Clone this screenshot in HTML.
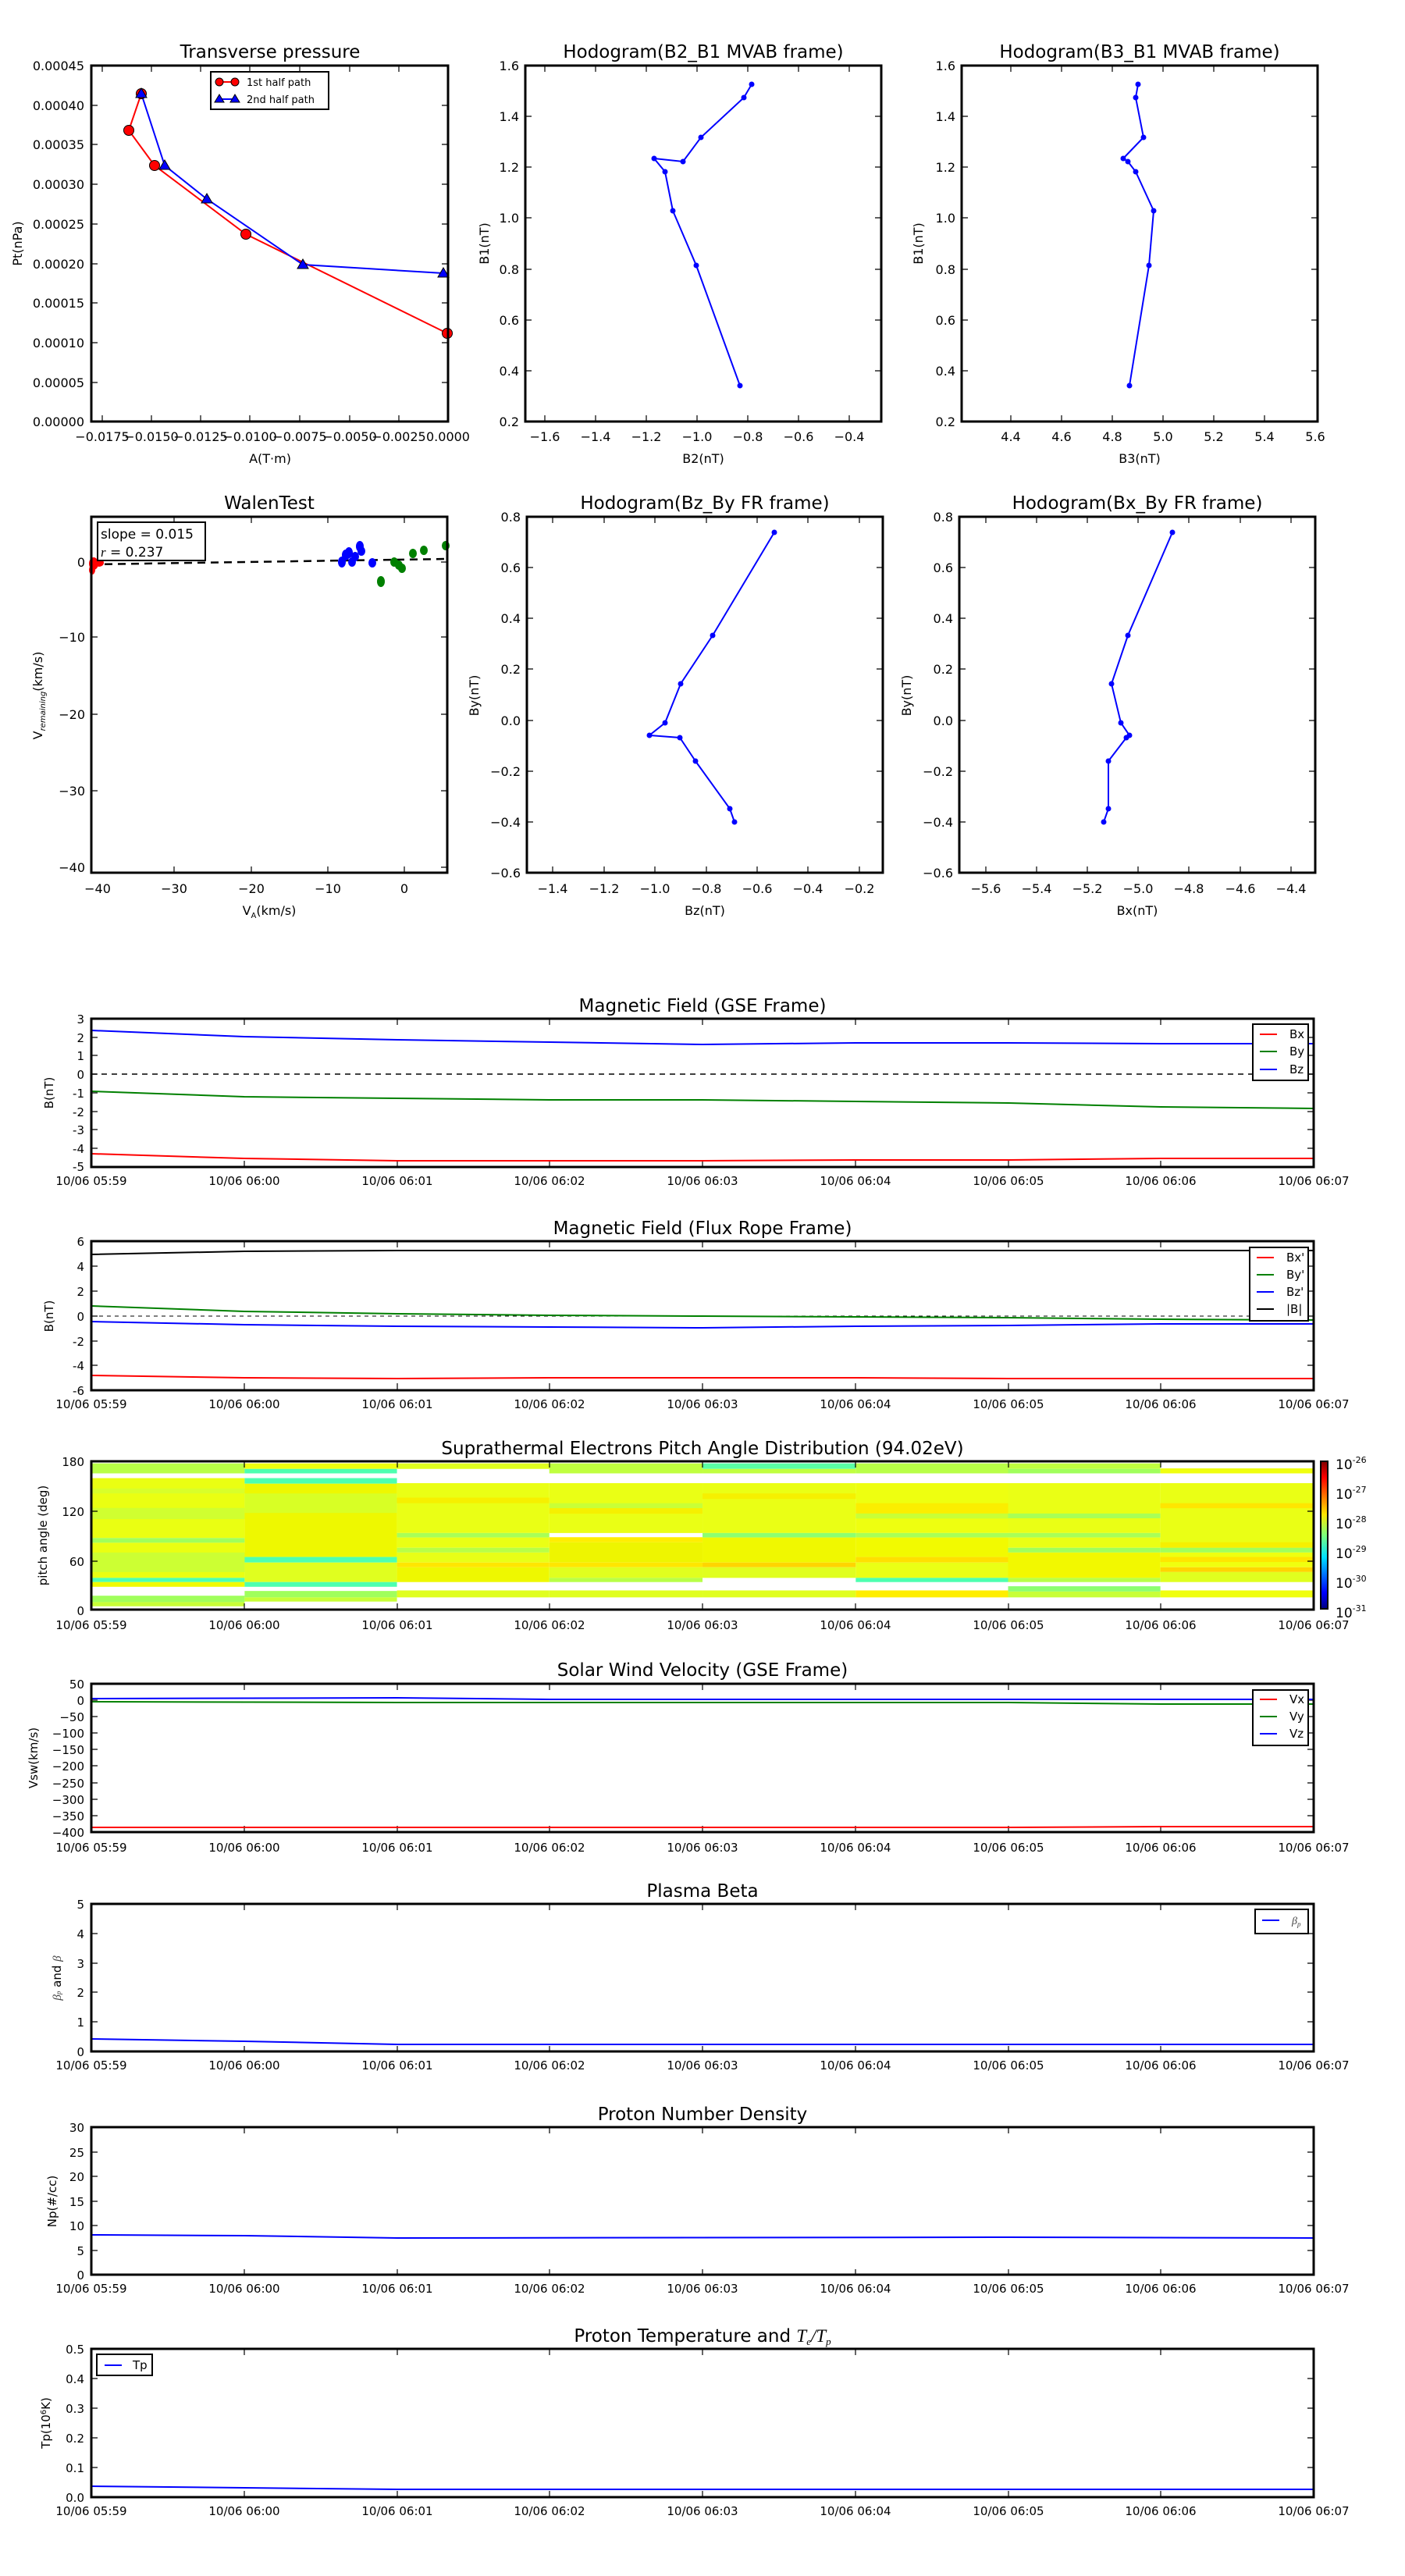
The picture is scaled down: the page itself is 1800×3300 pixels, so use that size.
<!DOCTYPE html>
<html><head><meta charset="utf-8"><style>
html,body{margin:0;padding:0;background:#fff;}
svg{display:block;}
text{font-family:"DejaVu Sans","Liberation Sans",sans-serif;fill:#000;}
.t{font-size:23px;text-anchor:middle;}
.k{font-size:16px;}
.s{font-size:15px;}
.r{text-anchor:end;}
.m{text-anchor:middle;}
.ax{fill:none;stroke:#000;stroke-width:3;}
.tk{stroke:#000;stroke-width:1.2;}
</style></head><body>
<svg width="1800" height="3300" viewBox="0 0 1800 3300" xmlns="http://www.w3.org/2000/svg">
<rect width="1800" height="3300" fill="#fff"/>

<!-- ============ Panel A: Transverse pressure ============ -->
<text class="t" x="346" y="74">Transverse pressure</text>
<g class="tk">
<path d="M131,84v8M194,84v8M257,84v8M320,84v8M384,84v8M448,84v8M511,84v8M131,540v-8M194,540v-8M257,540v-8M320,540v-8M384,540v-8M448,540v-8M511,540v-8"/>
<path d="M117,135h8M117,185h8M117,236h8M117,287h8M117,338h8M117,388h8M117,439h8M117,490h8M574,135h-8M574,185h-8M574,236h-8M574,287h-8M574,338h-8M574,388h-8M574,439h-8M574,490h-8"/>
</g>
<g class="k r">
<text x="108" y="90">0.00045</text><text x="108" y="141">0.00040</text><text x="108" y="191">0.00035</text><text x="108" y="242">0.00030</text><text x="108" y="293">0.00025</text><text x="108" y="344">0.00020</text><text x="108" y="394">0.00015</text><text x="108" y="445">0.00010</text><text x="108" y="496">0.00005</text><text x="108" y="546">0.00000</text>
</g>
<g class="k m">
<text x="131" y="565">−0.0175</text><text x="194" y="565">−0.0150</text><text x="257" y="565">−0.0125</text><text x="320" y="565">−0.0100</text><text x="384" y="565">−0.0075</text><text x="448" y="565">−0.0050</text><text x="511" y="565">−0.0025</text><text x="574" y="565">0.0000</text>
</g>
<text class="k m" x="346" y="593">A(T·m)</text>
<text class="k m" transform="translate(28,312) rotate(-90)">Pt(nPa)</text>
<polyline points="181,120 165,167 198,212 315,300 573,427" fill="none" stroke="#f00" stroke-width="2"/>
<polyline points="181,120 211,212 265,255 388,339 568,350" fill="none" stroke="#00f" stroke-width="2"/>
<g fill="#f00" stroke="#000" stroke-width="1"><circle cx="165" cy="167" r="6.5"/><circle cx="181" cy="120" r="6.5"/><circle cx="198" cy="212" r="6.5"/><circle cx="315" cy="300" r="6.5"/><circle cx="573" cy="427" r="6.5"/></g>
<g fill="#00f" stroke="#000" stroke-width="1"><path d="M181,113l7,12h-14z"/><path d="M211,205l7,12h-14z"/><path d="M265,248l7,12h-14z"/><path d="M388,332l7,12h-14z"/><path d="M568,343l7,12h-14z"/></g>
<rect x="270" y="92" width="151" height="48" fill="#fff" stroke="#000" stroke-width="2"/>
<line x1="281" y1="105" x2="301" y2="105" stroke="#f00" stroke-width="2"/><circle cx="281" cy="105" r="5" fill="#f00" stroke="#000"/><circle cx="301" cy="105" r="5" fill="#f00" stroke="#000"/>
<line x1="281" y1="127" x2="301" y2="127" stroke="#00f" stroke-width="2"/><path d="M281,121l6,10h-12z M301,121l6,10h-12z" fill="#00f" stroke="#000"/>
<text x="316" y="110" style="font-size:13px">1st half path</text>
<text x="316" y="132" style="font-size:13px">2nd half path</text>
<rect class="ax" x="117" y="84" width="457" height="456"/>

<!-- ============ Panel B ============ -->
<text class="t" x="901" y="74">Hodogram(B2_B1 MVAB frame)</text>
<g class="tk">
<path d="M698,84v8M763,84v8M828,84v8M893,84v8M958,84v8M1023,84v8M1088,84v8M698,540v-8M763,540v-8M828,540v-8M893,540v-8M958,540v-8M1023,540v-8M1088,540v-8"/>
<path d="M673,149h8M673,214h8M673,279h8M673,345h8M673,410h8M673,475h8M1129,149h-8M1129,214h-8M1129,279h-8M1129,345h-8M1129,410h-8M1129,475h-8"/>
</g>
<g class="k r"><text x="665" y="90">1.6</text><text x="665" y="155">1.4</text><text x="665" y="220">1.2</text><text x="665" y="285">1.0</text><text x="665" y="351">0.8</text><text x="665" y="416">0.6</text><text x="665" y="481">0.4</text><text x="665" y="546">0.2</text></g>
<g class="k m"><text x="698" y="565">−1.6</text><text x="763" y="565">−1.4</text><text x="828" y="565">−1.2</text><text x="893" y="565">−1.0</text><text x="958" y="565">−0.8</text><text x="1023" y="565">−0.6</text><text x="1088" y="565">−0.4</text></g>
<text class="k m" x="901" y="593">B2(nT)</text>
<text class="k m" transform="translate(626,312) rotate(-90)">B1(nT)</text>
<polyline points="963,108 953,125 898,176 875,207 838,203 852,220 862,270 892,340 948,494" fill="none" stroke="#00f" stroke-width="2"/>
<g fill="#00f"><circle cx="963" cy="108" r="3.5"/><circle cx="953" cy="125" r="3.5"/><circle cx="898" cy="176" r="3.5"/><circle cx="875" cy="207" r="3.5"/><circle cx="838" cy="203" r="3.5"/><circle cx="852" cy="220" r="3.5"/><circle cx="862" cy="270" r="3.5"/><circle cx="892" cy="340" r="3.5"/><circle cx="948" cy="494" r="3.5"/></g>
<rect class="ax" x="673" y="84" width="456" height="456"/>

<!-- ============ Panel C ============ -->
<text class="t" x="1460" y="74">Hodogram(B3_B1 MVAB frame)</text>
<g class="tk">
<path d="M1295,84v8M1360,84v8M1425,84v8M1490,84v8M1555,84v8M1620,84v8M1295,540v-8M1360,540v-8M1425,540v-8M1490,540v-8M1555,540v-8M1620,540v-8"/>
<path d="M1232,149h8M1232,214h8M1232,279h8M1232,345h8M1232,410h8M1232,475h8M1688,149h-8M1688,214h-8M1688,279h-8M1688,345h-8M1688,410h-8M1688,475h-8"/>
</g>
<g class="k r"><text x="1224" y="90">1.6</text><text x="1224" y="155">1.4</text><text x="1224" y="220">1.2</text><text x="1224" y="285">1.0</text><text x="1224" y="351">0.8</text><text x="1224" y="416">0.6</text><text x="1224" y="481">0.4</text><text x="1224" y="546">0.2</text></g>
<g class="k m"><text x="1295" y="565">4.4</text><text x="1360" y="565">4.6</text><text x="1425" y="565">4.8</text><text x="1490" y="565">5.0</text><text x="1555" y="565">5.2</text><text x="1620" y="565">5.4</text><text x="1685" y="565">5.6</text></g>
<text class="k m" x="1460" y="593">B3(nT)</text>
<text class="k m" transform="translate(1182,312) rotate(-90)">B1(nT)</text>
<polyline points="1458,108 1455,125 1465,176 1439,203 1445,207 1455,220 1478,270 1472,340 1447,494" fill="none" stroke="#00f" stroke-width="2"/>
<g fill="#00f"><circle cx="1458" cy="108" r="3.5"/><circle cx="1455" cy="125" r="3.5"/><circle cx="1465" cy="176" r="3.5"/><circle cx="1445" cy="207" r="3.5"/><circle cx="1439" cy="203" r="3.5"/><circle cx="1455" cy="220" r="3.5"/><circle cx="1478" cy="270" r="3.5"/><circle cx="1472" cy="340" r="3.5"/><circle cx="1447" cy="494" r="3.5"/></g>
<rect class="ax" x="1232" y="84" width="456" height="456"/>

<!-- ============ Panel D: WalenTest ============ -->
<text class="t" x="345" y="652">WalenTest</text>
<g class="tk">
<path d="M223,662v8M322,662v8M420,662v8M518,662v8M223,1118v-8M322,1118v-8M420,1118v-8M518,1118v-8"/>
<path d="M117,816h8M117,915h8M117,1013h8M573,720h-8M573,816h-8M573,915h-8M573,1013h-8M573,1111h-8"/>
</g>
<g class="k r"><text x="109" y="726">0</text><text x="109" y="822">−10</text><text x="109" y="921">−20</text><text x="109" y="1019">−30</text><text x="109" y="1117">−40</text></g>
<g class="k m"><text x="125" y="1144">−40</text><text x="223" y="1144">−30</text><text x="322" y="1144">−20</text><text x="420" y="1144">−10</text><text x="518" y="1144">0</text></g>
<text class="k m" x="345" y="1172">V<tspan style="font-size:10px" dy="4">A</tspan><tspan dy="-4">(km/s)</tspan></text>
<text class="k m" transform="translate(54,891) rotate(-90)">V<tspan style="font-size:10px;font-style:italic" dy="4">remaining</tspan><tspan dy="-4">(km/s)</tspan></text>
<line x1="117" y1="723" x2="573" y2="716" stroke="#000" stroke-width="2.5" stroke-dasharray="10,7"/>
<g fill="#f00"><ellipse cx="120" cy="722" rx="6" ry="8"/><ellipse cx="127" cy="721" rx="6" ry="5"/><ellipse cx="118" cy="730" rx="4" ry="6"/></g>
<g fill="#00f"><ellipse cx="438" cy="720" rx="5" ry="7"/><ellipse cx="443" cy="711" rx="5" ry="7"/><ellipse cx="447" cy="708" rx="5" ry="7"/><ellipse cx="451" cy="720" rx="5" ry="6"/><ellipse cx="455" cy="713" rx="5" ry="6"/><ellipse cx="461" cy="700" rx="5" ry="7"/><ellipse cx="463" cy="706" rx="5" ry="6"/><ellipse cx="477" cy="721" rx="5" ry="6"/></g>
<g fill="#008000"><ellipse cx="488" cy="745" rx="5" ry="7"/><ellipse cx="505" cy="720" rx="5" ry="6"/><ellipse cx="511" cy="724" rx="5" ry="6"/><ellipse cx="515" cy="728" rx="5" ry="6"/><ellipse cx="529" cy="709" rx="5" ry="6"/><ellipse cx="543" cy="705" rx="5" ry="6"/><ellipse cx="571" cy="699" rx="5" ry="6"/></g>
<rect x="125" y="669" width="138" height="49" fill="#fff" stroke="#000" stroke-width="2"/>
<text x="129" y="690" style="font-size:17px">slope = 0.015</text>
<text x="129" y="713" style="font-size:17px"><tspan style="font-style:italic;font-family:'Liberation Serif',serif">r</tspan> = 0.237</text>
<rect class="ax" x="117" y="662" width="456" height="456"/>

<!-- ============ Panel E ============ -->
<text class="t" x="903" y="652">Hodogram(Bz_By FR frame)</text>
<g class="tk">
<path d="M708,662v8M774,662v8M839,662v8M905,662v8M970,662v8M1035,662v8M1101,662v8M708,1118v-8M774,1118v-8M839,1118v-8M905,1118v-8M970,1118v-8M1035,1118v-8M1101,1118v-8"/>
<path d="M675,727h8M675,792h8M675,857h8M675,923h8M675,988h8M675,1053h8M1131,727h-8M1131,792h-8M1131,857h-8M1131,923h-8M1131,988h-8M1131,1053h-8"/>
</g>
<g class="k r"><text x="667" y="668">0.8</text><text x="667" y="733">0.6</text><text x="667" y="798">0.4</text><text x="667" y="863">0.2</text><text x="667" y="929">0.0</text><text x="667" y="994">−0.2</text><text x="667" y="1059">−0.4</text><text x="667" y="1124">−0.6</text></g>
<g class="k m"><text x="708" y="1144">−1.4</text><text x="774" y="1144">−1.2</text><text x="839" y="1144">−1.0</text><text x="905" y="1144">−0.8</text><text x="970" y="1144">−0.6</text><text x="1035" y="1144">−0.4</text><text x="1101" y="1144">−0.2</text></g>
<text class="k m" x="903" y="1172">Bz(nT)</text>
<text class="k m" transform="translate(613,891) rotate(-90)">By(nT)</text>
<polyline points="992,682 913,814 872,876 852,926 832,942 871,945 891,975 935,1036 941,1053" fill="none" stroke="#00f" stroke-width="2"/>
<g fill="#00f"><circle cx="992" cy="682" r="3.5"/><circle cx="913" cy="814" r="3.5"/><circle cx="872" cy="876" r="3.5"/><circle cx="852" cy="926" r="3.5"/><circle cx="832" cy="942" r="3.5"/><circle cx="871" cy="945" r="3.5"/><circle cx="891" cy="975" r="3.5"/><circle cx="935" cy="1036" r="3.5"/><circle cx="941" cy="1053" r="3.5"/></g>
<rect class="ax" x="675" y="662" width="456" height="456"/>

<!-- ============ Panel F ============ -->
<text class="t" x="1457" y="652">Hodogram(Bx_By FR frame)</text>
<g class="tk">
<path d="M1263,662v8M1328,662v8M1393,662v8M1458,662v8M1523,662v8M1589,662v8M1654,662v8M1263,1118v-8M1328,1118v-8M1393,1118v-8M1458,1118v-8M1523,1118v-8M1589,1118v-8M1654,1118v-8"/>
<path d="M1229,727h8M1229,792h8M1229,857h8M1229,923h8M1229,988h8M1229,1053h8M1685,727h-8M1685,792h-8M1685,857h-8M1685,923h-8M1685,988h-8M1685,1053h-8"/>
</g>
<g class="k r"><text x="1221" y="668">0.8</text><text x="1221" y="733">0.6</text><text x="1221" y="798">0.4</text><text x="1221" y="863">0.2</text><text x="1221" y="929">0.0</text><text x="1221" y="994">−0.2</text><text x="1221" y="1059">−0.4</text><text x="1221" y="1124">−0.6</text></g>
<g class="k m"><text x="1263" y="1144">−5.6</text><text x="1328" y="1144">−5.4</text><text x="1393" y="1144">−5.2</text><text x="1458" y="1144">−5.0</text><text x="1523" y="1144">−4.8</text><text x="1589" y="1144">−4.6</text><text x="1654" y="1144">−4.4</text></g>
<text class="k m" x="1457" y="1172">Bx(nT)</text>
<text class="k m" transform="translate(1167,891) rotate(-90)">By(nT)</text>
<polyline points="1502,682 1445,814 1424,876 1436,926 1447,942 1443,945 1420,975 1420,1036 1414,1053" fill="none" stroke="#00f" stroke-width="2"/>
<g fill="#00f"><circle cx="1502" cy="682" r="3.5"/><circle cx="1445" cy="814" r="3.5"/><circle cx="1424" cy="876" r="3.5"/><circle cx="1436" cy="926" r="3.5"/><circle cx="1447" cy="942" r="3.5"/><circle cx="1443" cy="945" r="3.5"/><circle cx="1420" cy="975" r="3.5"/><circle cx="1420" cy="1036" r="3.5"/><circle cx="1414" cy="1053" r="3.5"/></g>
<rect class="ax" x="1229" y="662" width="456" height="456"/>

<defs>
<path id="tt" d="M313,0v8M509,0v8M704,0v8M900,0v8M1096,0v8M1292,0v8M1487,0v8M313,190v-8M509,190v-8M704,190v-8M900,190v-8M1096,190v-8M1292,190v-8M1487,190v-8" stroke="#000" stroke-width="1.2"/>
</defs>

<!-- ============ GSE ============ -->
<text class="t" x="900" y="1296">Magnetic Field (GSE Frame)</text>
<use href="#tt" y="1305"/>
<g class="tk"><path d="M117,1329h8M117,1352h8M117,1376h8M117,1400h8M117,1424h8M117,1447h8M117,1471h8M1683,1329h-8M1683,1352h-8M1683,1376h-8M1683,1400h-8M1683,1424h-8M1683,1447h-8M1683,1471h-8"/></g>
<g class="s r"><text x="108" y="1311">3</text><text x="108" y="1335">2</text><text x="108" y="1358">1</text><text x="108" y="1382">0</text><text x="108" y="1406">-1</text><text x="108" y="1430">-2</text><text x="108" y="1453">-3</text><text x="108" y="1477">-4</text><text x="108" y="1500">-5</text></g>
<g class="s m"><text x="117" y="1518">10/06 05:59</text><text x="313" y="1518">10/06 06:00</text><text x="509" y="1518">10/06 06:01</text><text x="704" y="1518">10/06 06:02</text><text x="900" y="1518">10/06 06:03</text><text x="1096" y="1518">10/06 06:04</text><text x="1292" y="1518">10/06 06:05</text><text x="1487" y="1518">10/06 06:06</text><text x="1683" y="1518">10/06 06:07</text></g>
<text class="s m" transform="translate(68,1400) rotate(-90)">B(nT)</text>
<line x1="117" y1="1376" x2="1683" y2="1376" stroke="#000" stroke-width="1.5" stroke-dasharray="7,6"/>
<polyline points="117,1320 313,1328 509,1332 704,1335 900,1338 1096,1336 1292,1336 1487,1337 1683,1337" fill="none" stroke="#00f" stroke-width="2"/>
<polyline points="117,1398 313,1405 509,1407 704,1409 900,1409 1096,1411 1292,1413 1487,1418 1683,1420" fill="none" stroke="#008000" stroke-width="2"/>
<polyline points="117,1478 313,1484 509,1487 704,1487 900,1487 1096,1486 1292,1486 1487,1484 1683,1484" fill="none" stroke="#f00" stroke-width="2"/>
<rect x="1605" y="1312" width="71" height="72" fill="#fff" stroke="#000" stroke-width="2"/>
<line x1="1614" y1="1325" x2="1636" y2="1325" stroke="#f00" stroke-width="2"/><line x1="1614" y1="1347" x2="1636" y2="1347" stroke="#008000" stroke-width="2"/><line x1="1614" y1="1370" x2="1636" y2="1370" stroke="#00f" stroke-width="2"/>
<g class="s"><text x="1652" y="1330">Bx</text><text x="1652" y="1352">By</text><text x="1652" y="1375">Bz</text></g>
<rect class="ax" x="117" y="1305" width="1566" height="190"/>

<!-- ============ Flux rope ============ -->
<text class="t" x="900" y="1581">Magnetic Field (Flux Rope Frame)</text>
<use href="#tt" y="1590"/>
<g class="tk"><path d="M117,1622h8M117,1654h8M117,1686h8M117,1718h8M117,1749h8M1683,1622h-8M1683,1654h-8M1683,1686h-8M1683,1718h-8M1683,1749h-8"/></g>
<g class="s r"><text x="108" y="1596">6</text><text x="108" y="1628">4</text><text x="108" y="1660">2</text><text x="108" y="1692">0</text><text x="108" y="1724">-2</text><text x="108" y="1755">-4</text><text x="108" y="1787">-6</text></g>
<g class="s m"><text x="117" y="1804">10/06 05:59</text><text x="313" y="1804">10/06 06:00</text><text x="509" y="1804">10/06 06:01</text><text x="704" y="1804">10/06 06:02</text><text x="900" y="1804">10/06 06:03</text><text x="1096" y="1804">10/06 06:04</text><text x="1292" y="1804">10/06 06:05</text><text x="1487" y="1804">10/06 06:06</text><text x="1683" y="1804">10/06 06:07</text></g>
<text class="s m" transform="translate(68,1686) rotate(-90)">B(nT)</text>
<line x1="117" y1="1686" x2="1683" y2="1686" stroke="#000" stroke-width="1" stroke-dasharray="5,5"/>
<polyline points="117,1607 313,1603 509,1602 704,1602 900,1602 1096,1602 1292,1602 1487,1602 1683,1602" fill="none" stroke="#000" stroke-width="2"/>
<polyline points="117,1673 313,1680 509,1683 704,1685 900,1686 1096,1687 1292,1688 1487,1690 1683,1691" fill="none" stroke="#008000" stroke-width="2"/>
<polyline points="117,1693 313,1697 509,1699 704,1700 900,1701 1096,1699 1292,1698 1487,1696 1683,1696" fill="none" stroke="#00f" stroke-width="2"/>
<polyline points="117,1762 313,1765 509,1766 704,1765 900,1765 1096,1765 1292,1766 1487,1766 1683,1766" fill="none" stroke="#f00" stroke-width="2"/>
<rect x="1601" y="1598" width="75" height="94" fill="#fff" stroke="#000" stroke-width="2"/>
<line x1="1610" y1="1611" x2="1632" y2="1611" stroke="#f00" stroke-width="2"/><line x1="1610" y1="1633" x2="1632" y2="1633" stroke="#008000" stroke-width="2"/><line x1="1610" y1="1655" x2="1632" y2="1655" stroke="#00f" stroke-width="2"/><line x1="1610" y1="1677" x2="1632" y2="1677" stroke="#000" stroke-width="2"/>
<g class="s"><text x="1648" y="1616">Bx'</text><text x="1648" y="1638">By'</text><text x="1648" y="1660">Bz'</text><text x="1648" y="1682">|B|</text></g>
<rect class="ax" x="117" y="1590" width="1566" height="191"/>

<!-- ============ PAD ============ -->
<text class="t" x="900" y="1863">Suprathermal Electrons Pitch Angle Distribution (94.02eV)</text>
<g transform="translate(0,1840) scale(1.148,0.357)">
<rect x="102" y="97" width="171" height="36" fill="#b8ff47"/><rect x="102" y="150" width="171" height="215" fill="#eaff12"/><rect x="102" y="187" width="171" height="18" fill="#d8ff2a"/><rect x="102" y="257" width="171" height="40" fill="#d0ff30"/><rect x="102" y="365" width="171" height="17" fill="#a0ff5c"/><rect x="102" y="382" width="171" height="126" fill="#eaff12"/><rect x="102" y="417" width="171" height="70" fill="#ccff33"/><rect x="102" y="508" width="171" height="15" fill="#4dffb0"/><rect x="102" y="523" width="171" height="17" fill="#f0fa00"/><rect x="102" y="572" width="171" height="23" fill="#a0ff5c"/><rect x="102" y="595" width="171" height="15" fill="#c8ff37"/>
<rect x="273" y="97" width="170" height="20" fill="#f0ff0f"/><rect x="273" y="117" width="170" height="16" fill="#4dffb0"/><rect x="273" y="150" width="170" height="20" fill="#4dffb0"/><rect x="273" y="170" width="170" height="263" fill="#eef800"/><rect x="273" y="205" width="170" height="70" fill="#d8ff25"/><rect x="273" y="433" width="170" height="20" fill="#4dffb0"/><rect x="273" y="453" width="170" height="70" fill="#e0ff1f"/><rect x="273" y="523" width="170" height="17" fill="#4dffb0"/><rect x="273" y="555" width="170" height="23" fill="#a0ff5c"/><rect x="273" y="578" width="170" height="15" fill="#c8ff37"/>
<rect x="443" y="97" width="170" height="20" fill="#e0ff1f"/><rect x="443" y="168" width="170" height="179" fill="#eaff15"/><rect x="443" y="220" width="170" height="20" fill="#f6f000"/><rect x="443" y="347" width="170" height="16" fill="#a8ff57"/><rect x="443" y="363" width="170" height="37" fill="#eaff15"/><rect x="443" y="400" width="170" height="17" fill="#b8ff47"/><rect x="443" y="417" width="170" height="36" fill="#e8ff17"/><rect x="443" y="453" width="170" height="17" fill="#ffe600"/><rect x="443" y="470" width="170" height="53" fill="#eef800"/><rect x="443" y="553" width="170" height="25" fill="#e0ff1f"/>
<rect x="613" y="97" width="171" height="36" fill="#c0ff3f"/><rect x="613" y="168" width="171" height="179" fill="#eaff15"/><rect x="613" y="240" width="171" height="18" fill="#c8ff37"/><rect x="613" y="258" width="171" height="20" fill="#f6f000"/><rect x="613" y="362" width="171" height="18" fill="#ffee00"/><rect x="613" y="380" width="171" height="73" fill="#eef500"/><rect x="613" y="453" width="171" height="17" fill="#ffe600"/><rect x="613" y="470" width="171" height="38" fill="#e0ff1f"/><rect x="613" y="508" width="171" height="15" fill="#b8ff47"/><rect x="613" y="553" width="171" height="25" fill="#e0ff1f"/>
<rect x="784" y="97" width="171" height="20" fill="#5affa5"/><rect x="784" y="117" width="171" height="16" fill="#c0ff3f"/><rect x="784" y="168" width="171" height="179" fill="#eaff15"/><rect x="784" y="205" width="171" height="20" fill="#f6f000"/><rect x="784" y="347" width="171" height="16" fill="#8cff70"/><rect x="784" y="363" width="171" height="90" fill="#f0f800"/><rect x="784" y="453" width="171" height="17" fill="#ffd500"/><rect x="784" y="470" width="171" height="38" fill="#e0ff1f"/><rect x="784" y="553" width="171" height="25" fill="#e0ff1f"/>
<rect x="955" y="97" width="170" height="36" fill="#b8ff47"/><rect x="955" y="168" width="170" height="179" fill="#eeff10"/><rect x="955" y="240" width="170" height="37" fill="#fbee00"/><rect x="955" y="277" width="170" height="18" fill="#c8ff37"/><rect x="955" y="347" width="170" height="16" fill="#a8ff57"/><rect x="955" y="363" width="170" height="70" fill="#f2fa00"/><rect x="955" y="433" width="170" height="20" fill="#ffe000"/><rect x="955" y="453" width="170" height="55" fill="#eaff15"/><rect x="955" y="508" width="170" height="15" fill="#4dffb0"/><rect x="955" y="553" width="170" height="25" fill="#ffee00"/>
<rect x="1125" y="97" width="170" height="20" fill="#c0ff3f"/><rect x="1125" y="117" width="170" height="16" fill="#a0ff5c"/><rect x="1125" y="168" width="170" height="179" fill="#eaff15"/><rect x="1125" y="277" width="170" height="17" fill="#a8ff57"/><rect x="1125" y="347" width="170" height="16" fill="#a8ff57"/><rect x="1125" y="363" width="170" height="37" fill="#eaff15"/><rect x="1125" y="400" width="170" height="17" fill="#a0ff5c"/><rect x="1125" y="417" width="170" height="91" fill="#f2f800"/><rect x="1125" y="508" width="170" height="15" fill="#b8ff47"/><rect x="1125" y="538" width="170" height="19" fill="#8cff70"/><rect x="1125" y="557" width="170" height="21" fill="#c8ff37"/>
<rect x="1295" y="115" width="171" height="18" fill="#f0ff0f"/><rect x="1295" y="168" width="171" height="232" fill="#eaff15"/><rect x="1295" y="240" width="171" height="18" fill="#ffe600"/><rect x="1295" y="380" width="171" height="20" fill="#f6f000"/><rect x="1295" y="400" width="171" height="17" fill="#a0ff5c"/><rect x="1295" y="417" width="171" height="53" fill="#f0ff0f"/><rect x="1295" y="433" width="171" height="18" fill="#ffe600"/><rect x="1295" y="470" width="171" height="17" fill="#ffd500"/><rect x="1295" y="487" width="171" height="36" fill="#e0ff1f"/><rect x="1295" y="553" width="171" height="25" fill="#f0ff0f"/>
</g>
<use href="#tt" y="1872"/>
<g class="tk"><path d="M117,1936h8M117,2000h8M1683,1936h-8M1683,2000h-8"/></g>
<g class="s r"><text x="108" y="1878">180</text><text x="108" y="1942">120</text><text x="108" y="2006">60</text><text x="108" y="2069">0</text></g>
<g class="s m"><text x="117" y="2087">10/06 05:59</text><text x="313" y="2087">10/06 06:00</text><text x="509" y="2087">10/06 06:01</text><text x="704" y="2087">10/06 06:02</text><text x="900" y="2087">10/06 06:03</text><text x="1096" y="2087">10/06 06:04</text><text x="1292" y="2087">10/06 06:05</text><text x="1487" y="2087">10/06 06:06</text><text x="1683" y="2087">10/06 06:07</text></g>
<text class="s m" transform="translate(60,1967) rotate(-90)">pitch angle (deg)</text>
<rect class="ax" x="117" y="1872" width="1566" height="190"/>
<defs><linearGradient id="jet" x1="0" y1="1" x2="0" y2="0">
<stop offset="0" stop-color="#00007f"/><stop offset="0.11" stop-color="#0000ff"/><stop offset="0.35" stop-color="#00e0ff"/><stop offset="0.5" stop-color="#7dff7a"/><stop offset="0.64" stop-color="#ffe600"/><stop offset="0.89" stop-color="#ff0000"/><stop offset="1" stop-color="#7f0000"/></linearGradient></defs>
<rect x="1692" y="1872" width="9" height="189" fill="url(#jet)" stroke="#000" stroke-width="2"/>
<g style="font-size:17px"><text x="1711" y="1882">10<tspan dy="-8" style="font-size:11px">-26</tspan></text><text x="1711" y="1920">10<tspan dy="-8" style="font-size:11px">-27</tspan></text><text x="1711" y="1958">10<tspan dy="-8" style="font-size:11px">-28</tspan></text><text x="1711" y="1996">10<tspan dy="-8" style="font-size:11px">-29</tspan></text><text x="1711" y="2034">10<tspan dy="-8" style="font-size:11px">-30</tspan></text><text x="1711" y="2072">10<tspan dy="-8" style="font-size:11px">-31</tspan></text></g>

<!-- ============ Solar wind ============ -->
<text class="t" x="900" y="2147">Solar Wind Velocity (GSE Frame)</text>
<use href="#tt" y="2157"/>
<g class="tk"><path d="M117,2178h8M117,2199h8M117,2220h8M117,2241h8M117,2262h8M117,2284h8M117,2305h8M117,2326h8M1683,2178h-8M1683,2199h-8M1683,2220h-8M1683,2241h-8M1683,2262h-8M1683,2284h-8M1683,2305h-8M1683,2326h-8"/></g>
<g class="s r"><text x="108" y="2163">50</text><text x="108" y="2184">0</text><text x="108" y="2205">−50</text><text x="108" y="2226">−100</text><text x="108" y="2247">−150</text><text x="108" y="2268">−200</text><text x="108" y="2290">−250</text><text x="108" y="2311">−300</text><text x="108" y="2332">−350</text><text x="108" y="2353">−400</text></g>
<g class="s m"><text x="117" y="2372">10/06 05:59</text><text x="313" y="2372">10/06 06:00</text><text x="509" y="2372">10/06 06:01</text><text x="704" y="2372">10/06 06:02</text><text x="900" y="2372">10/06 06:03</text><text x="1096" y="2372">10/06 06:04</text><text x="1292" y="2372">10/06 06:05</text><text x="1487" y="2372">10/06 06:06</text><text x="1683" y="2372">10/06 06:07</text></g>
<text class="s m" transform="translate(48,2252) rotate(-90)">Vsw(km/s)</text>
<polyline points="117,2176 509,2175 704,2177 1683,2177" fill="none" stroke="#00f" stroke-width="2"/>
<polyline points="117,2180 509,2181 1292,2181 1487,2183 1683,2183" fill="none" stroke="#008000" stroke-width="2"/>
<polyline points="117,2341 1292,2341 1487,2340 1683,2340" fill="none" stroke="#f00" stroke-width="2"/>
<rect x="1605" y="2165" width="71" height="71" fill="#fff" stroke="#000" stroke-width="2"/>
<line x1="1614" y1="2177" x2="1636" y2="2177" stroke="#f00" stroke-width="2"/><line x1="1614" y1="2199" x2="1636" y2="2199" stroke="#008000" stroke-width="2"/><line x1="1614" y1="2221" x2="1636" y2="2221" stroke="#00f" stroke-width="2"/>
<g class="s"><text x="1652" y="2182">Vx</text><text x="1652" y="2204">Vy</text><text x="1652" y="2226">Vz</text></g>
<rect class="ax" x="117" y="2157" width="1566" height="190"/>

<!-- ============ Beta ============ -->
<text class="t" x="900" y="2430">Plasma Beta</text>
<use href="#tt" y="2439"/>
<g class="tk"><path d="M117,2477h8M117,2515h8M117,2552h8M117,2590h8M1683,2477h-8M1683,2515h-8M1683,2552h-8M1683,2590h-8"/></g>
<g class="s r"><text x="108" y="2445">5</text><text x="108" y="2483">4</text><text x="108" y="2521">3</text><text x="108" y="2558">2</text><text x="108" y="2596">1</text><text x="108" y="2634">0</text></g>
<g class="s m"><text x="117" y="2651">10/06 05:59</text><text x="313" y="2651">10/06 06:00</text><text x="509" y="2651">10/06 06:01</text><text x="704" y="2651">10/06 06:02</text><text x="900" y="2651">10/06 06:03</text><text x="1096" y="2651">10/06 06:04</text><text x="1292" y="2651">10/06 06:05</text><text x="1487" y="2651">10/06 06:06</text><text x="1683" y="2651">10/06 06:07</text></g>
<text class="s m" transform="translate(78,2534) rotate(-90)"><tspan style="font-style:italic;font-family:'Liberation Serif',serif;fill:#444">β<tspan style="font-size:9px">p</tspan></tspan> and <tspan style="font-style:italic;font-family:'Liberation Serif',serif;fill:#444">β</tspan></text>
<polyline points="117,2612 313,2615 509,2619 1683,2619" fill="none" stroke="#00f" stroke-width="2"/>
<rect x="1608" y="2446" width="68" height="31" fill="#fff" stroke="#000" stroke-width="2"/>
<line x1="1617" y1="2460" x2="1639" y2="2460" stroke="#00f" stroke-width="2"/>
<text x="1655" y="2465" style="font-size:14px;font-style:italic;font-family:'Liberation Serif',serif;fill:#444">β<tspan style="font-size:9px" dy="3">p</tspan></text>
<rect class="ax" x="117" y="2439" width="1566" height="189"/>

<!-- ============ Density ============ -->
<text class="t" x="900" y="2716">Proton Number Density</text>
<use href="#tt" y="2725"/>
<g class="tk"><path d="M117,2757h8M117,2788h8M117,2820h8M117,2851h8M117,2883h8M1683,2757h-8M1683,2788h-8M1683,2820h-8M1683,2851h-8M1683,2883h-8"/></g>
<g class="s r"><text x="108" y="2731">30</text><text x="108" y="2763">25</text><text x="108" y="2794">20</text><text x="108" y="2826">15</text><text x="108" y="2857">10</text><text x="108" y="2889">5</text><text x="108" y="2920">0</text></g>
<g class="s m"><text x="117" y="2937">10/06 05:59</text><text x="313" y="2937">10/06 06:00</text><text x="509" y="2937">10/06 06:01</text><text x="704" y="2937">10/06 06:02</text><text x="900" y="2937">10/06 06:03</text><text x="1096" y="2937">10/06 06:04</text><text x="1292" y="2937">10/06 06:05</text><text x="1487" y="2937">10/06 06:06</text><text x="1683" y="2937">10/06 06:07</text></g>
<text class="s m" transform="translate(72,2820) rotate(-90)">Np(#/cc)</text>
<polyline points="117,2863 313,2864 509,2867 1292,2866 1683,2867" fill="none" stroke="#00f" stroke-width="2"/>
<rect class="ax" x="117" y="2725" width="1566" height="189"/>

<!-- ============ Temperature ============ -->
<text class="t" x="900" y="3000">Proton Temperature and <tspan style="font-style:italic;font-family:'Liberation Serif',serif">T<tspan style="font-size:13px" dy="4">e</tspan><tspan dy="-4">/T</tspan><tspan style="font-size:13px" dy="4">p</tspan></tspan></text>
<use href="#tt" y="3009"/>
<g class="tk"><path d="M117,3047h8M117,3085h8M117,3123h8M117,3161h8M1683,3047h-8M1683,3085h-8M1683,3123h-8M1683,3161h-8"/></g>
<g class="s r"><text x="108" y="3015">0.5</text><text x="108" y="3053">0.4</text><text x="108" y="3091">0.3</text><text x="108" y="3129">0.2</text><text x="108" y="3167">0.1</text><text x="108" y="3205">0.0</text></g>
<g class="s m"><text x="117" y="3222">10/06 05:59</text><text x="313" y="3222">10/06 06:00</text><text x="509" y="3222">10/06 06:01</text><text x="704" y="3222">10/06 06:02</text><text x="900" y="3222">10/06 06:03</text><text x="1096" y="3222">10/06 06:04</text><text x="1292" y="3222">10/06 06:05</text><text x="1487" y="3222">10/06 06:06</text><text x="1683" y="3222">10/06 06:07</text></g>
<text class="s m" transform="translate(64,3104) rotate(-90)">Tp(10<tspan style="font-size:10px" dy="-5">6</tspan><tspan dy="5">K)</tspan></text>
<polyline points="117,3185 313,3187 509,3189 1683,3189" fill="none" stroke="#00f" stroke-width="2"/>
<rect x="124" y="3016" width="71" height="27" fill="#fff" stroke="#000" stroke-width="2"/>
<line x1="134" y1="3030" x2="156" y2="3030" stroke="#00f" stroke-width="2"/>
<text class="s" x="170" y="3035">Tp</text>
<rect class="ax" x="117" y="3009" width="1566" height="190"/>
</svg>
</body></html>
